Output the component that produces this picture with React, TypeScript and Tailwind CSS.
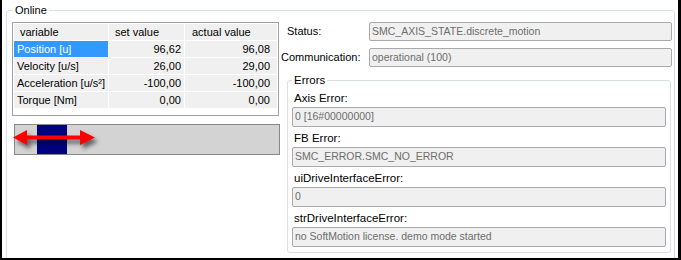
import React from "react";

const rows = [
  { name: "Position [u]", set: "96,62", act: "96,08", sel: true },
  { name: "Velocity [u/s]", set: "26,00", act: "29,00" },
  { name: "Acceleration [u/s²]", set: "-100,00", act: "-100,00" },
  { name: "Torque [Nm]", set: "0,00", act: "0,00" },
];

function Box({ children }: { children: React.ReactNode }) {
  return (
    <div className="h-[20px] flex items-center px-[2px] border border-[#a9a9a9] rounded-[2px] bg-[#f0f0f0] text-[#6d6d6d] text-[10.5px] whitespace-nowrap overflow-hidden">
      {children}
    </div>
  );
}

function ErrLabel({ children }: { children: React.ReactNode }) {
  return <div className="h-[20px] pt-[4px] pl-[2px] leading-[14px] text-[11.5px]">{children}</div>;
}

export default function App() {
  return (
    <div className="w-[681px] h-[260px] overflow-hidden bg-white border-l-2 border-r-[3px] border-b-2 border-black text-[11px] text-black font-['Liberation_Sans',Arial,sans-serif]">
      <fieldset className="ml-[4px] mt-[3px] w-[669px] h-[290px] border border-[#d5dfe5] rounded-[3px] pl-[5px]">
        <legend className="ml-[1px] px-[2px] leading-[14px] text-[11px]">Online</legend>
        <div className="flex items-start mt-[5px]">
          {/* left column */}
          <div className="w-[267px] flex flex-col">
            <div className="h-[94px] border border-[#a0a0a0] bg-white p-px">
              <div className="grid grid-cols-[94px_75px_92px] gap-px">
                <div className="h-[16px] bg-[#f0f0f0] pl-[6px] leading-[16px]">variable</div>
                <div className="h-[16px] bg-[#f0f0f0] pl-[6px] leading-[16px]">set value</div>
                <div className="h-[16px] bg-[#f0f0f0] pl-[7px] leading-[16px]">actual value</div>
                {rows.map((r) => (
                  <React.Fragment key={r.name}>
                    <div
                      className={
                        r.sel
                          ? "h-[16px] bg-[#3399ff] text-white pl-[3px] leading-[16px] whitespace-nowrap"
                          : "h-[16px] bg-[#f0f0f0] pl-[3px] leading-[16px] whitespace-nowrap"
                      }
                    >
                      {r.name}
                    </div>
                    <div className="h-[16px] bg-[#f0f0f0] pr-[3px] text-right leading-[16px]">{r.set}</div>
                    <div className="h-[16px] bg-[#f0f0f0] pr-[7px] text-right leading-[16px]">{r.act}</div>
                  </React.Fragment>
                ))}
              </div>
            </div>
            <div className="relative mt-[8px] ml-[2px] w-[266px] h-[31px] border border-[#888888] bg-[#d3d3d3] flex">
              <div className="ml-[22px] w-[30px] h-full bg-[#000080]" />
              <svg
                className="absolute left-[-3px] top-[4px]"
                width="90"
                height="24"
                viewBox="0 0 90 24"
                style={{ filter: "drop-shadow(3px 4px 2px rgba(0,0,0,0.55))" }}
              >
                <polygon
                  points="1,8.5 15,1 15,6.5 68,6.5 68,1 83,8.5 68,16 68,10.5 15,10.5 15,16"
                  fill="#ff0000"
                />
              </svg>
            </div>
          </div>
          {/* right column */}
          <div className="ml-[2px] w-[391px] flex flex-col">
            <div className="flex h-[19px] items-center">
              <div className="w-[88px] pl-[6px]">Status:</div>
              <div className="flex-1 h-[19px] flex items-center px-[2px] border border-[#a9a9a9] rounded-[2px] bg-[#f0f0f0] text-[#6d6d6d] text-[10.5px]">
                SMC_AXIS_STATE.discrete_motion
              </div>
            </div>
            <div className="flex h-[19px] items-center mt-[7px]">
              <div className="w-[88px] whitespace-nowrap">Communication:</div>
              <div className="flex-1 h-[19px] flex items-center px-[2px] border border-[#a9a9a9] rounded-[2px] bg-[#f0f0f0] text-[#6d6d6d] text-[10.5px]">
                operational (100)
              </div>
            </div>
            <fieldset className="mt-[6px] ml-[6px] w-[384px] border border-[#d5dfe5] rounded-[3px] px-[4px] pb-[5px]">
              <legend className="ml-0 px-[2px] leading-[14px] text-[11.5px]">Errors</legend>
              <ErrLabel>Axis Error:</ErrLabel>
              <Box>0 [16#00000000]</Box>
              <ErrLabel>FB Error:</ErrLabel>
              <Box>SMC_ERROR.SMC_NO_ERROR</Box>
              <ErrLabel>uiDriveInterfaceError:</ErrLabel>
              <Box>0</Box>
              <ErrLabel>strDriveInterfaceError:</ErrLabel>
              <Box>no SoftMotion license. demo mode started</Box>
            </fieldset>
          </div>
        </div>
      </fieldset>
    </div>
  );
}
